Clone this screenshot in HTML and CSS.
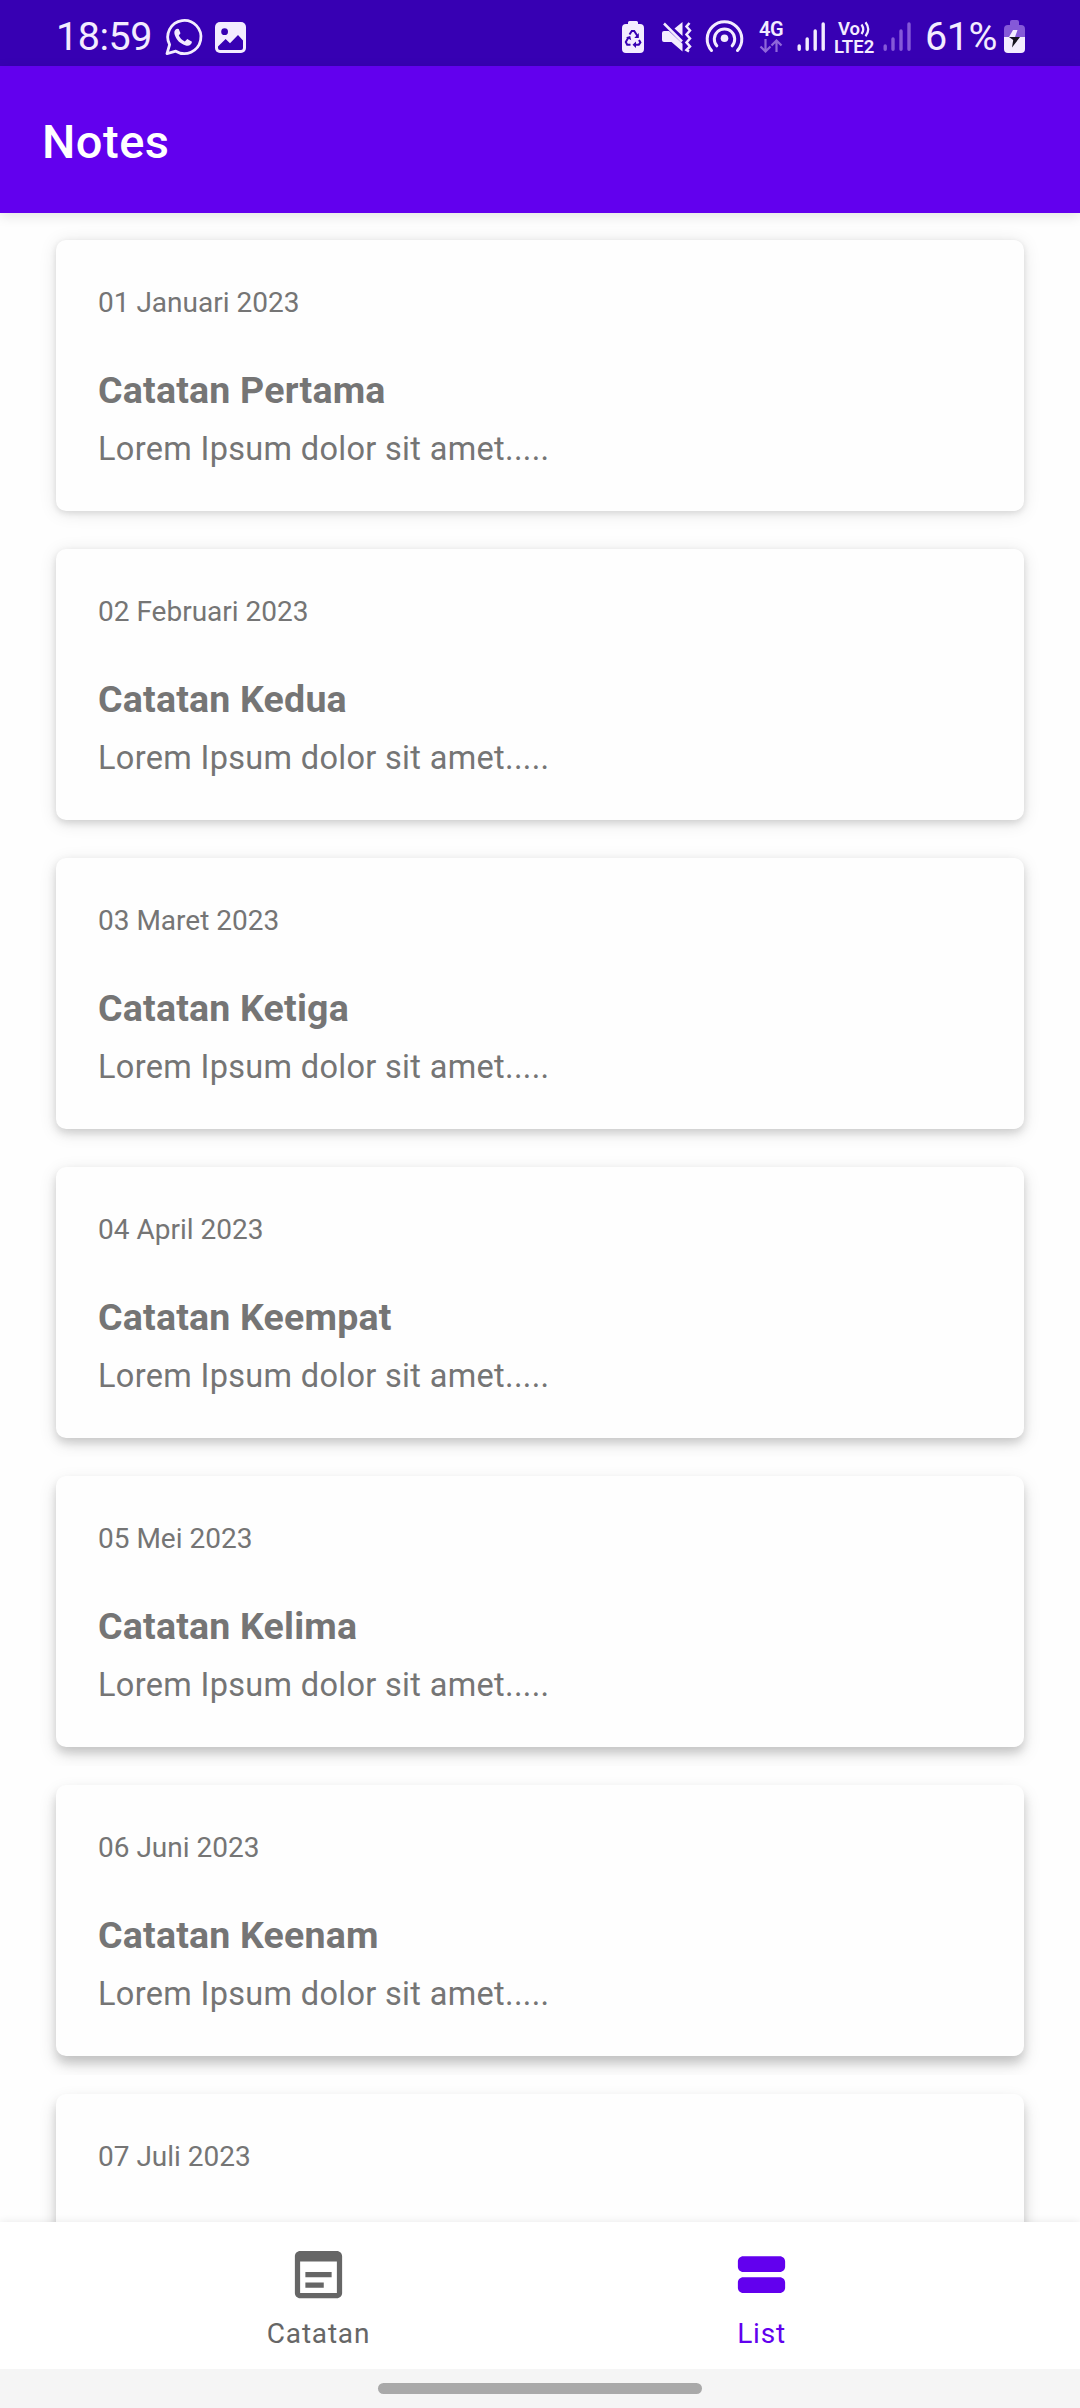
FILE: index.html
```
<!DOCTYPE html>
<html lang="id">
<head>
<meta charset="utf-8">
<title>Notes</title>
<link rel="stylesheet" href="styles.css">
</head>
<body>
<div class="screen">
  <div class="status">
    <div class="status-group">
      <span class="status-text">18:59</span>
      <svg class="icon" width="46" height="66" viewBox="160 0 46 66" fill="none" stroke="#f3ecff">
        <path d="M167 53.6 169.6 44.6A16.6 16.6 0 1 1 175.8 51.2Z" stroke-width="2.8" stroke-linejoin="round"/>
        <path d="M177.5 28.8c-3 .6-3.700 3.300-2.700 6.200 2 5.500 5.500 8.700 11 10.500 3.200.9 6-.9 6.200-3.700l-4.700-2.700-2.500 2.300c-3-1.300-4.700-3.100-6-5.800l1.700-2.400-1.800-4.200z" fill="#f3ecff" stroke="none"/>
      </svg>
      <svg class="icon" width="44" height="66" viewBox="206 0 44 66">
        <rect x="215" y="22" width="31" height="31" rx="5" fill="#f3ecff"/>
        <circle cx="224.600" cy="31.700" r="3.400" fill="#3700b3"/>
        <path d="M218 46.500 225.600 39l4.400 4.300L238 35l5 5.500v7.500a2 2 0 0 1-2 2h-21a2 2 0 0 1-2-2z" fill="#3700b3"/>
      </svg>
    </div>
    <div class="status-group">
      <svg class="icon" width="36" height="66" viewBox="617 0 36 66">
        <path d="M629 24v-1.500q0-1.500 1.500-1.500h7q1.500 0 1.500 1.500V24h2q4 0 4 4v21q0 4-4 4h-14q-4 0-4-4V28q0-4 4-4z" fill="#f3ecff"/>
        <path d="M630.500 34.500 632.800 31h2.400l3.600 5.500M640 40l1.400 2.500-1.600 2.200h-4.300M631.500 44.700h-3.300L626.800 42l2.600-4.500" fill="none" stroke="#3700b3" stroke-width="2"/>
        <path d="M639.800 33v5h-4.500zM637 41.500v6.400l-3.500-3.200zM627 37.300l4.200-1.300 1 4.300z" fill="#3700b3"/>
      </svg>
      <svg class="icon" width="48" height="66" viewBox="652 0 48 66">
        <path d="M662 33q0-2 2-2h5l13.500 12.800V51.500L671.500 42H664q-2 0-2-2zM674.500 28.500l8-6.500v14z" fill="#f3ecff"/>
        <path d="M664 23.500 682 41.500M689.500 23l-3 3.500 3.500 4-3.500 4 3.500 4-3.500 4 3.500 4-3.500 3.500 2.500 1.500" fill="none" stroke="#f3ecff" stroke-width="2.500"/>
      </svg>
      <svg class="icon" width="50" height="66" viewBox="700 0 50 66" fill="none" stroke="#f3ecff" stroke-width="3" stroke-linecap="round">
        <path d="M711.500 50.500A17.300 17.300 0 1 1 737.500 50.500M716.800 45.800A10.200 10.200 0 1 1 732.200 45.800"/>
        <circle cx="724.500" cy="38.300" r="3.800" fill="#f3ecff" stroke="none"/>
      </svg>
      <div class="net net-4g">
        <span>4G</span>
        <svg width="24" height="14" viewBox="0 0 24 14" fill="none" stroke="#8f67da" stroke-width="2.200"><path d="M6.500 0v12M1.500 7.500l5 5 5-5M17.500 13V1.500M12.500 6.500l5-5 5 5"/></svg>
      </div>
      <svg class="icon" width="40" height="66" viewBox="792 0 40 66" stroke="#f3ecff" stroke-width="3.400" stroke-linecap="round">
        <path d="M799.200 46v3.300M807.200 39v10.300M815.200 31v18.300M823.200 24v25.300"/>
      </svg>
      <div class="net net-lte">
        <span class="vo">Vo<svg width="11" height="16" viewBox="0 0 11 16" fill="none" stroke="#f3ecff" stroke-width="2.200"><path d="M1.500 3.500q3.500 5 0 9.500M5.500 1.200q5.500 7 0 14"/></svg></span>
        <span class="lte">LTE2</span>
      </div>
      <svg class="icon" width="42" height="66" viewBox="878 0 42 66" stroke="#8559d8" stroke-width="3.400" stroke-linecap="round">
        <path d="M885.200 46v3.300M893 39v10.300M901 31v18.300M909 24v25.300"/>
      </svg>
      <span class="status-text percent">61%</span>
      <svg class="icon" width="26" height="66" viewBox="1000 0 26 66">
        <path d="M1010 25v-3q0-2 2-2h5q2 0 2 2v3h2q4 0 4 4v8h-21v-8q0-4 4-4z" fill="#8559d8"/>
        <path d="M1004 37h21v12q0 4-4 4h-13q-4 0-4-4z" fill="#f3ecff"/>
        <path d="M1013 30h4.500l-2.500 7h-6z" fill="#f3ecff"/>
        <path d="M1009 37h11l-8 10.500 1.200-7.500z" fill="#16131f"/>
      </svg>
    </div>
  </div>
  <header class="appbar"><h1>Notes</h1></header>
  <main class="list">
    <article class="card s1"><p class="date">01 Januari 2023</p><h2>Catatan Pertama</h2><p class="body">Lorem Ipsum dolor sit amet.....</p></article>
    <article class="card s2"><p class="date">02 Februari 2023</p><h2>Catatan Kedua</h2><p class="body">Lorem Ipsum dolor sit amet.....</p></article>
    <article class="card s3"><p class="date">03 Maret 2023</p><h2>Catatan Ketiga</h2><p class="body">Lorem Ipsum dolor sit amet.....</p></article>
    <article class="card s4"><p class="date">04 April 2023</p><h2>Catatan Keempat</h2><p class="body">Lorem Ipsum dolor sit amet.....</p></article>
    <article class="card s5"><p class="date">05 Mei 2023</p><h2>Catatan Kelima</h2><p class="body">Lorem Ipsum dolor sit amet.....</p></article>
    <article class="card s6"><p class="date">06 Juni 2023</p><h2>Catatan Keenam</h2><p class="body">Lorem Ipsum dolor sit amet.....</p></article>
    <article class="card s7"><p class="date">07 Juli 2023</p></article>
  </main>
  <nav class="tabs">
    <a class="tab">
      <svg width="63" height="63" viewBox="0 0 24 24" fill="currentColor"><path d="M14 17H7v-2h7v2zM17 13H7v-2h10v2zM19 3H5c-1.110 0-2 .9-2 2v14c0 1.100.89 2 2 2h14c1.100 0 2-.9 2-2V5c0-1.100-.89-2-2-2zm0 16H5V7h14v12z"/></svg>
      <span>Catatan</span>
    </a>
    <a class="tab active">
      <svg width="63" height="63" viewBox="0 0 24 24" fill="currentColor"><path d="M19 13H5c-1.100 0-2 .9-2 2v2c0 1.100.9 2 2 2h14c1.100 0 2-.9 2-2v-2c0-1.100-.9-2-2-2zM19 5H5c-1.100 0-2 .9-2 2v2c0 1.100.9 2 2 2h14c1.100 0 2-.9 2-2V7c0-1.100-.9-2-2-2z"/></svg>
      <span>List</span>
    </a>
  </nav>
  <div class="gesture"><div class="pill"></div></div>
</div>
</body>
</html>
```
FILE: styles.css
```
* { box-sizing: border-box; margin: 0; padding: 0; }
body { background: #fefefe; font-family: Roboto, sans-serif; }
.screen { width: 1080px; height: 2408px; display: flex; flex-direction: column; overflow: hidden; background: #fefefe; }

.status { flex: none; height: 66px; padding: 0 54px 0 56px; display: flex; justify-content: space-between; background: #3700b3; color: #f3ecff; }
.status-group { display: flex; }
.icon { flex: none; display: block; }
.status-text { width: 104px; font-size: 39.5px; line-height: 73px; letter-spacing: -0.5px; white-space: nowrap; }
.percent { width: 80px; padding-left: 5px; }
.net { display: flex; flex-direction: column; font-weight: 600; font-size: 20px; line-height: 16px; padding-top: 21px; white-space: nowrap; }
.net svg { flex: none; display: block; }
.net-4g { width: 42px; padding-left: 9px; gap: 2px; letter-spacing: -0.5px; }
.net-lte { width: 46px; padding-left: 2px; font-size: 18.5px; gap: 2px; }
.vo { display: flex; padding-left: 4px; height: 16px; }

.appbar { flex: none; position: relative; z-index: 1; height: 147px; padding-left: 42px; display: flex; align-items: center; background: #6200ee; color: #fff; box-shadow: 0 3px 12px rgba(0, 0, 0, .11); }
.appbar h1 { font-size: 47px; font-weight: 500; line-height: 56px; letter-spacing: 0.5px; padding-top: 5px; }

.list { flex: 1; min-height: 0; overflow: hidden; padding: 27px 56px 0; display: flex; flex-direction: column; gap: 38px; }
.card { flex: none; height: 271px; padding: 43px 42px 41px; border-radius: 10px; background: #fefefe; color: #757575; clip-path: inset(-19px -40px); }
.date { font-size: 28px; line-height: 40px; }
.card h2 { margin-top: 45px; font-size: 37.5px; line-height: 44px; font-weight: 700; letter-spacing: 0.2px; }
.body { margin-top: 17px; font-size: 32.5px; line-height: 40px; letter-spacing: 0.32px; }
.s1 { box-shadow: 0 2px 6px rgba(0, 0, 0, .11), 0 2px 18px rgba(0, 0, 0, .10); }
.s2 { box-shadow: 0 3px 7px rgba(0, 0, 0, .12), 0 3px 18px rgba(0, 0, 0, .11); }
.s3 { box-shadow: 0 4px 8px rgba(0, 0, 0, .13), 0 4px 18px rgba(0, 0, 0, .11); }
.s4 { box-shadow: 0 5px 9px rgba(0, 0, 0, .13), 0 5px 18px rgba(0, 0, 0, .12); }
.s5 { box-shadow: 0 6px 9px rgba(0, 0, 0, .13), 0 7px 18px rgba(0, 0, 0, .13); }
.s6, .s7 { box-shadow: 0 7px 10px rgba(0, 0, 0, .13), 0 8px 18px rgba(0, 0, 0, .14); }

.tabs { flex: none; position: relative; z-index: 1; height: 147px; padding: 0 97px; display: flex; background: #fff; box-shadow: 0 0 8px rgba(0, 0, 0, .09); }
.tab { flex: 1; padding-top: 21px; display: flex; flex-direction: column; align-items: center; color: #666; font-size: 28px; line-height: 36px; letter-spacing: 0.8px; }
.tab svg { display: block; }
.tab span { padding-top: 10px; }
.tab.active { color: #6200ee; }
.gesture { flex: none; position: relative; z-index: 2; height: 39px; padding-top: 14px; background: #f5f5f5; }
.pill { width: 324px; height: 11px; margin: 0 auto; border-radius: 6px; background: #a9a9a9; }
```
